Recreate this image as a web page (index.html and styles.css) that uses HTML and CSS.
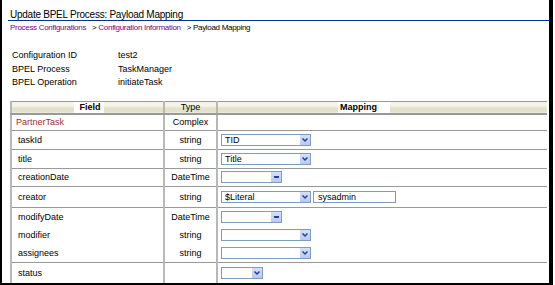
FILE: index.html
```html
<!DOCTYPE html>
<html>
<head>
<meta charset="utf-8">
<link rel="stylesheet" href="styles.css">
</head>
<body>
<div class="frame">
  <h1 class="title">Update BPEL Process: Payload Mapping</h1>
  <div class="crumbs">
    <a class="crumb">Process Configurations</a>
    <span class="sep">&gt;</span> <a class="crumb">Configuration Information</a>
    <span class="sep">&gt;</span> <span class="current">Payload Mapping</span>
  </div>
  <div class="info">
    <div class="info-row"><span class="info-label">Configuration ID</span><span>test2</span></div>
    <div class="info-row"><span class="info-label">BPEL Process</span><span>TaskManager</span></div>
    <div class="info-row"><span class="info-label">BPEL Operation</span><span>initiateTask</span></div>
  </div>
  <table class="map">
    <colgroup><col class="c-field"><col class="c-type"><col class="c-map"></colgroup>
    <thead>
      <tr><th class="h-field"><span class="hbox">Field</span></th><th class="h-type">Type</th><th class="h-map"><span class="hbox hbox-map">Mapping</span></th></tr>
    </thead>
    <tbody>
      <tr class="r-partner"><td class="partner">PartnerTask</td><td class="type">Complex</td><td></td></tr>
      <tr class="r19"><td class="fname">taskId</td><td class="type">string</td><td><div class="sel w90"><span class="val">TID</span><span class="btn"><svg viewBox="0 0 8 8" width="8" height="8"><path d="M1.5 2.5 L4 5 L6.5 2.5" fill="none" stroke="#2a3f8f" stroke-width="1.5"/></svg></span></div></td></tr>
      <tr class="r19"><td class="fname">title</td><td class="type">string</td><td><div class="sel w90"><span class="val">Title</span><span class="btn"><svg viewBox="0 0 8 8" width="8" height="8"><path d="M1.5 2.5 L4 5 L6.5 2.5" fill="none" stroke="#2a3f8f" stroke-width="1.5"/></svg></span></div></td></tr>
      <tr class="r18"><td class="fname">creationDate</td><td class="type">DateTime</td><td><div class="sel w61"><span class="val"></span><span class="btn"><span class="dash"></span></span></div></td></tr>
      <tr class="r21"><td class="fname">creator</td><td class="type">string</td><td><div class="pair"><div class="sel w90"><span class="val">$Literal</span><span class="btn"><svg viewBox="0 0 8 8" width="8" height="8"><path d="M1.5 2.5 L4 5 L6.5 2.5" fill="none" stroke="#2a3f8f" stroke-width="1.5"/></svg></span></div><div class="txt">sysadmin</div></div></td></tr>
      <tr class="r-group"><td class="fname">modifyDate</td><td class="type">DateTime</td><td><div class="sel w61"><span class="val"></span><span class="btn"><span class="dash"></span></span></div></td></tr>
      <tr class="r-group"><td class="fname">modifier</td><td class="type">string</td><td><div class="sel w90"><span class="val"></span><span class="btn"><svg viewBox="0 0 8 8" width="8" height="8"><path d="M1.5 2.5 L4 5 L6.5 2.5" fill="none" stroke="#2a3f8f" stroke-width="1.5"/></svg></span></div></td></tr>
      <tr class="r-group r-last"><td class="fname">assignees</td><td class="type">string</td><td><div class="sel w90"><span class="val"></span><span class="btn"><svg viewBox="0 0 8 8" width="8" height="8"><path d="M1.5 2.5 L4 5 L6.5 2.5" fill="none" stroke="#2a3f8f" stroke-width="1.5"/></svg></span></div></td></tr>
      <tr class="r-status"><td class="fname">status</td><td class="type"></td><td><div class="sel w42"><span class="val"></span><span class="btn"><svg viewBox="0 0 8 8" width="8" height="8"><path d="M1.5 2.5 L4 5 L6.5 2.5" fill="none" stroke="#2a3f8f" stroke-width="1.5"/></svg></span></div></td></tr>
    </tbody>
  </table>
</div>
</body>
</html>
```

FILE: styles.css
```css
html, body {
  margin: 0;
  padding: 0;
  background: #fff;
}
body {
  font-family: "Liberation Sans", Arial, sans-serif;
  font-size: 9px;
  color: #000;
}
.frame {
  box-sizing: border-box;
  width: 553px;
  height: 285px;
  border-left: 2px solid #000;
  border-right: 4px solid #000;
  border-bottom: 2px solid #000;
  overflow: hidden;
}
.title {
  margin: 0 0 0 6px;
  width: 539px;
  padding: 9px 0 0 2px;
  font-size: 10px;
  font-weight: normal;
  line-height: 11px;
  border-bottom: 1px solid #003399;
  letter-spacing: -0.25px;
}
.crumbs {
  margin: 2px 0 0 8px;
  font-size: 8px;
  line-height: 10px;
  letter-spacing: -0.3px;
}
.crumb { color: #800080; }
.sep { margin-left: 4px; }
.current { color: #000; }
.info {
  margin: 16px 0 0 10px;
}
.info-row {
  display: flex;
  height: 13.5px;
  line-height: 13.5px;
}
.info-label { width: 106px; }
.map {
  margin: 11px 0 0 8px;
  width: 537px;
  border-collapse: collapse;
  table-layout: fixed;
}
.c-field { width: 153px; }
.c-type { width: 53px; }
.map th, .map td {
  padding: 0;
  border-left: 2px solid #b8b8b8;
  border-bottom: 1px solid #999;
  vertical-align: middle;
}
.map thead th {
  height: 11px;
  border-top: 1px solid #999;
  border-bottom: 2px solid #999;
  background: linear-gradient(#f6f4e6 0%, #f6f4e6 40%, #e2e2cc 60%, #e2e2cc 100%);
  font-size: 9px;
  line-height: 11px;
}
.hbox {
  display: inline-block;
  background: #fff;
  padding: 0 2px;
  font-weight: bold;
}
.h-field { text-align: center; }
.h-field .hbox { padding: 0 3px 0 5px; margin-left: 3px; }
.h-type { font-weight: normal; }
.h-map { text-align: left; }
.hbox-map { margin-left: 120px; width: 50px; text-align: left; padding: 0 0 0 2px; }
.r-partner td { height: 15px; }
.r19 td { height: 18px; }
.r18 td { height: 17px; }
.r21 td { height: 20px; }
.r-group td { height: 18.3px; border-bottom: 0; }
.r-group.r-last td { border-bottom: 1px solid #999; }
.r-status td { height: 20px; }
.partner { color: #993333; padding-left: 4px !important; }
.fname { padding-left: 6px !important; }
.type { text-align: center; }
.map td:nth-child(3) { padding-left: 3px; }
.sel {
  box-sizing: border-box;
  display: flex;
  height: 12px;
  border: 1px solid #7f9db9;
  background: #fff;
}
.w90 { width: 90px; }
.w61 { width: 61px; }
.w42 { width: 42px; }
.val {
  flex: 1;
  padding-left: 3px;
  line-height: 10px;
  font-size: 9px;
}
.btn {
  width: 10px;
  height: 10px;
  background: linear-gradient(#d6e0fb, #b9c8f5);
  display: flex;
  align-items: center;
  justify-content: center;
}
.dash {
  width: 5px;
  height: 2px;
  background: #2a3f8f;
}
.pair { display: flex; gap: 2px; }
.txt {
  box-sizing: border-box;
  width: 83px;
  height: 12px;
  border: 1px solid #7f9db9;
  padding-left: 4px;
  line-height: 10px;
}
```
